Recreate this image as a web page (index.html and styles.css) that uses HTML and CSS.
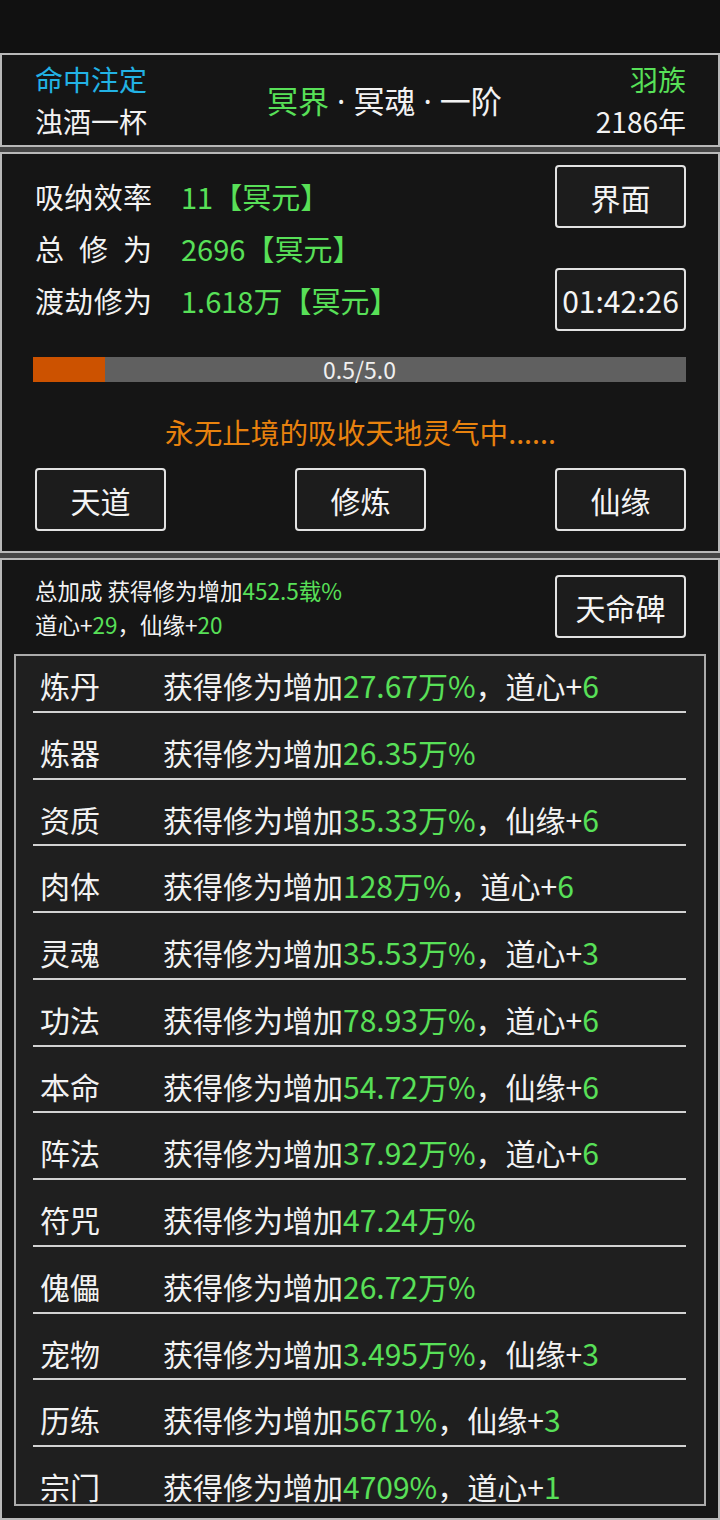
FILE: index.html
```html
<!DOCTYPE html>
<html lang="zh-CN">
<head>
<meta charset="utf-8">
<title>修仙</title>
<link rel="stylesheet" href="styles.css">
</head>
<body>
<div class="topband"></div>
<section class="panel head">
  <div class="col">
    <div class="cyan">命中注定</div>
    <div>浊酒一杯</div>
  </div>
  <div class="title"><span class="green">冥界</span><span class="dot">·</span>冥魂<span class="dot">·</span>一阶</div>
  <div class="col right">
    <div class="green">羽族</div>
    <div>2186年</div>
  </div>
</section>
<div class="gap"></div>
<section class="panel main">
  <div class="stats-area">
    <div class="stats">
      <div class="stat"><span class="label">吸纳效率</span><span class="green">11【冥元】</span></div>
      <div class="stat"><span class="label">总修为</span><span class="green">2696【冥元】</span></div>
      <div class="stat"><span class="label">渡劫修为</span><span class="green">1.618万【冥元】</span></div>
    </div>
    <div class="side-btns">
      <div class="btn">界面</div>
      <div class="btn">01:42:26</div>
    </div>
  </div>
  <div class="bar">
    <div class="fill" style="width:11%"></div>
    <span class="bar-text">0.5/5.0</span>
  </div>
  <div class="status">永无止境的吸收天地灵气中......</div>
  <div class="actions">
    <div class="btn">天道</div>
    <div class="btn">修炼</div>
    <div class="btn">仙缘</div>
  </div>
</section>
<div class="gap"></div>
<section class="panel bonus">
  <div class="bonus-head">
    <div class="summary">
      <div>总加成 获得修为增加<span class="green">452.5载%</span></div>
      <div>道心+<span class="green">29</span>，仙缘+<span class="green">20</span></div>
    </div>
    <div class="btn">天命碑</div>
  </div>
  <div class="listbox">
    <ul class="list">
      <li class="row"><span class="name">炼丹</span><span>获得修为增加<span class="green">27.67万%</span>，道心+<span class="green">6</span></span></li>
      <li class="row"><span class="name">炼器</span><span>获得修为增加<span class="green">26.35万%</span></span></li>
      <li class="row"><span class="name">资质</span><span>获得修为增加<span class="green">35.33万%</span>，仙缘+<span class="green">6</span></span></li>
      <li class="row"><span class="name">肉体</span><span>获得修为增加<span class="green">128万%</span>，道心+<span class="green">6</span></span></li>
      <li class="row"><span class="name">灵魂</span><span>获得修为增加<span class="green">35.53万%</span>，道心+<span class="green">3</span></span></li>
      <li class="row"><span class="name">功法</span><span>获得修为增加<span class="green">78.93万%</span>，道心+<span class="green">6</span></span></li>
      <li class="row"><span class="name">本命</span><span>获得修为增加<span class="green">54.72万%</span>，仙缘+<span class="green">6</span></span></li>
      <li class="row"><span class="name">阵法</span><span>获得修为增加<span class="green">37.92万%</span>，道心+<span class="green">6</span></span></li>
      <li class="row"><span class="name">符咒</span><span>获得修为增加<span class="green">47.24万%</span></span></li>
      <li class="row"><span class="name">傀儡</span><span>获得修为增加<span class="green">26.72万%</span></span></li>
      <li class="row"><span class="name">宠物</span><span>获得修为增加<span class="green">3.495万%</span>，仙缘+<span class="green">3</span></span></li>
      <li class="row"><span class="name">历练</span><span>获得修为增加<span class="green">5671%</span>，仙缘+<span class="green">3</span></span></li>
      <li class="row"><span class="name">宗门</span><span>获得修为增加<span class="green">4709%</span>，道心+<span class="green">1</span></span></li>
    </ul>
  </div>
</section>
</body>
</html>
```
FILE: styles.css
```css
html, body {
  margin: 0;
  padding: 0;
}
body {
  width: 720px;
  height: 1520px;
  overflow: hidden;
  background: #111111;
  color: #f2f2f2;
  font-family: "Noto Sans CJK SC", "Noto Sans", sans-serif;
  font-weight: 400;
}
.green { color: #58e058; }
.cyan { color: #22b2e4; }

.topband {
  height: 53px;
  background: #111111;
}
.gap {
  height: 5px;
  background: #454545;
}
.panel {
  box-sizing: border-box;
  border: 2px solid #b8b8b8;
  background: #151515;
}

/* header */
.head {
  height: 94px;
  padding: 3px 32px 0 33px;
  display: flex;
  justify-content: space-between;
  align-items: flex-start;
}
.head .col {
  font-size: 28px;
  line-height: 42px;
}
.head .right {
  text-align: right;
}
.title {
  align-self: center;
  margin-top: -3px;
  margin-left: 26px;
  font-size: 31px;
  line-height: 44px;
}
.dot {
  font-family: "Noto Sans", "DejaVu Sans", sans-serif;
  margin: 0 8px;
}

/* main panel */
.main {
  padding: 0 32px 20px 33px;
}
.stats-area {
  display: flex;
  justify-content: space-between;
  align-items: flex-start;
  padding-top: 11px;
}
.stats {
  margin-top: 5px;
  font-size: 29px;
}
.stat {
  height: 52px;
  line-height: 52px;
  display: flex;
}
.label {
  display: inline-block;
  width: 117px;
  margin-right: 29px;
  text-align: justify;
  text-align-last: justify;
}
.side-btns {
  display: flex;
  flex-direction: column;
  gap: 40px;
}
.btn {
  box-sizing: border-box;
  width: 131px;
  height: 63px;
  border: 2px solid #e2e2e2;
  border-radius: 4px;
  background: #1c1c1c;
  display: flex;
  align-items: center;
  justify-content: center;
  font-size: 30px;
  color: #f4f4f4;
}
.bar {
  margin: 26px 0 0 -2px;
  height: 25px;
  background: #606060;
  display: grid;
}
.fill {
  grid-area: 1 / 1;
  height: 25px;
  background: #cc5200;
}
.bar-text {
  grid-area: 1 / 1;
  justify-self: center;
  font-size: 23px;
  line-height: 25px;
  color: #f0f0f0;
}
.status {
  margin-top: 30px;
  line-height: 40px;
  font-size: 28.6px;
  text-align: center;
  color: #e8820e;
}
.actions {
  margin-top: 16px;
  display: flex;
  justify-content: space-between;
}

/* bonus panel */
.bonus {
  padding: 15px 32px 12px 33px;
}
.bonus-head {
  height: 63px;
  display: flex;
  justify-content: space-between;
  align-items: center;
}
.summary {
  font-size: 22.5px;
  line-height: 34px;
}
.listbox {
  box-sizing: border-box;
  margin: 16px -20px 0 -21px;
  height: 852px;
  border: 2px solid #ababab;
  background: #1f1f1f;
  overflow: hidden;
  padding: 0 18px 0 17px;
}
.list {
  list-style: none;
  margin: -10px 0 0 0;
  padding: 0;
}
.row {
  box-sizing: border-box;
  height: 66.75px;
  border-bottom: 2px solid #d2d2d2;
  padding: 19px 0 0 7px;
  display: flex;
  font-size: 30px;
  line-height: 40px;
  white-space: nowrap;
}
.name {
  width: 123px;
  flex: none;
}
```
